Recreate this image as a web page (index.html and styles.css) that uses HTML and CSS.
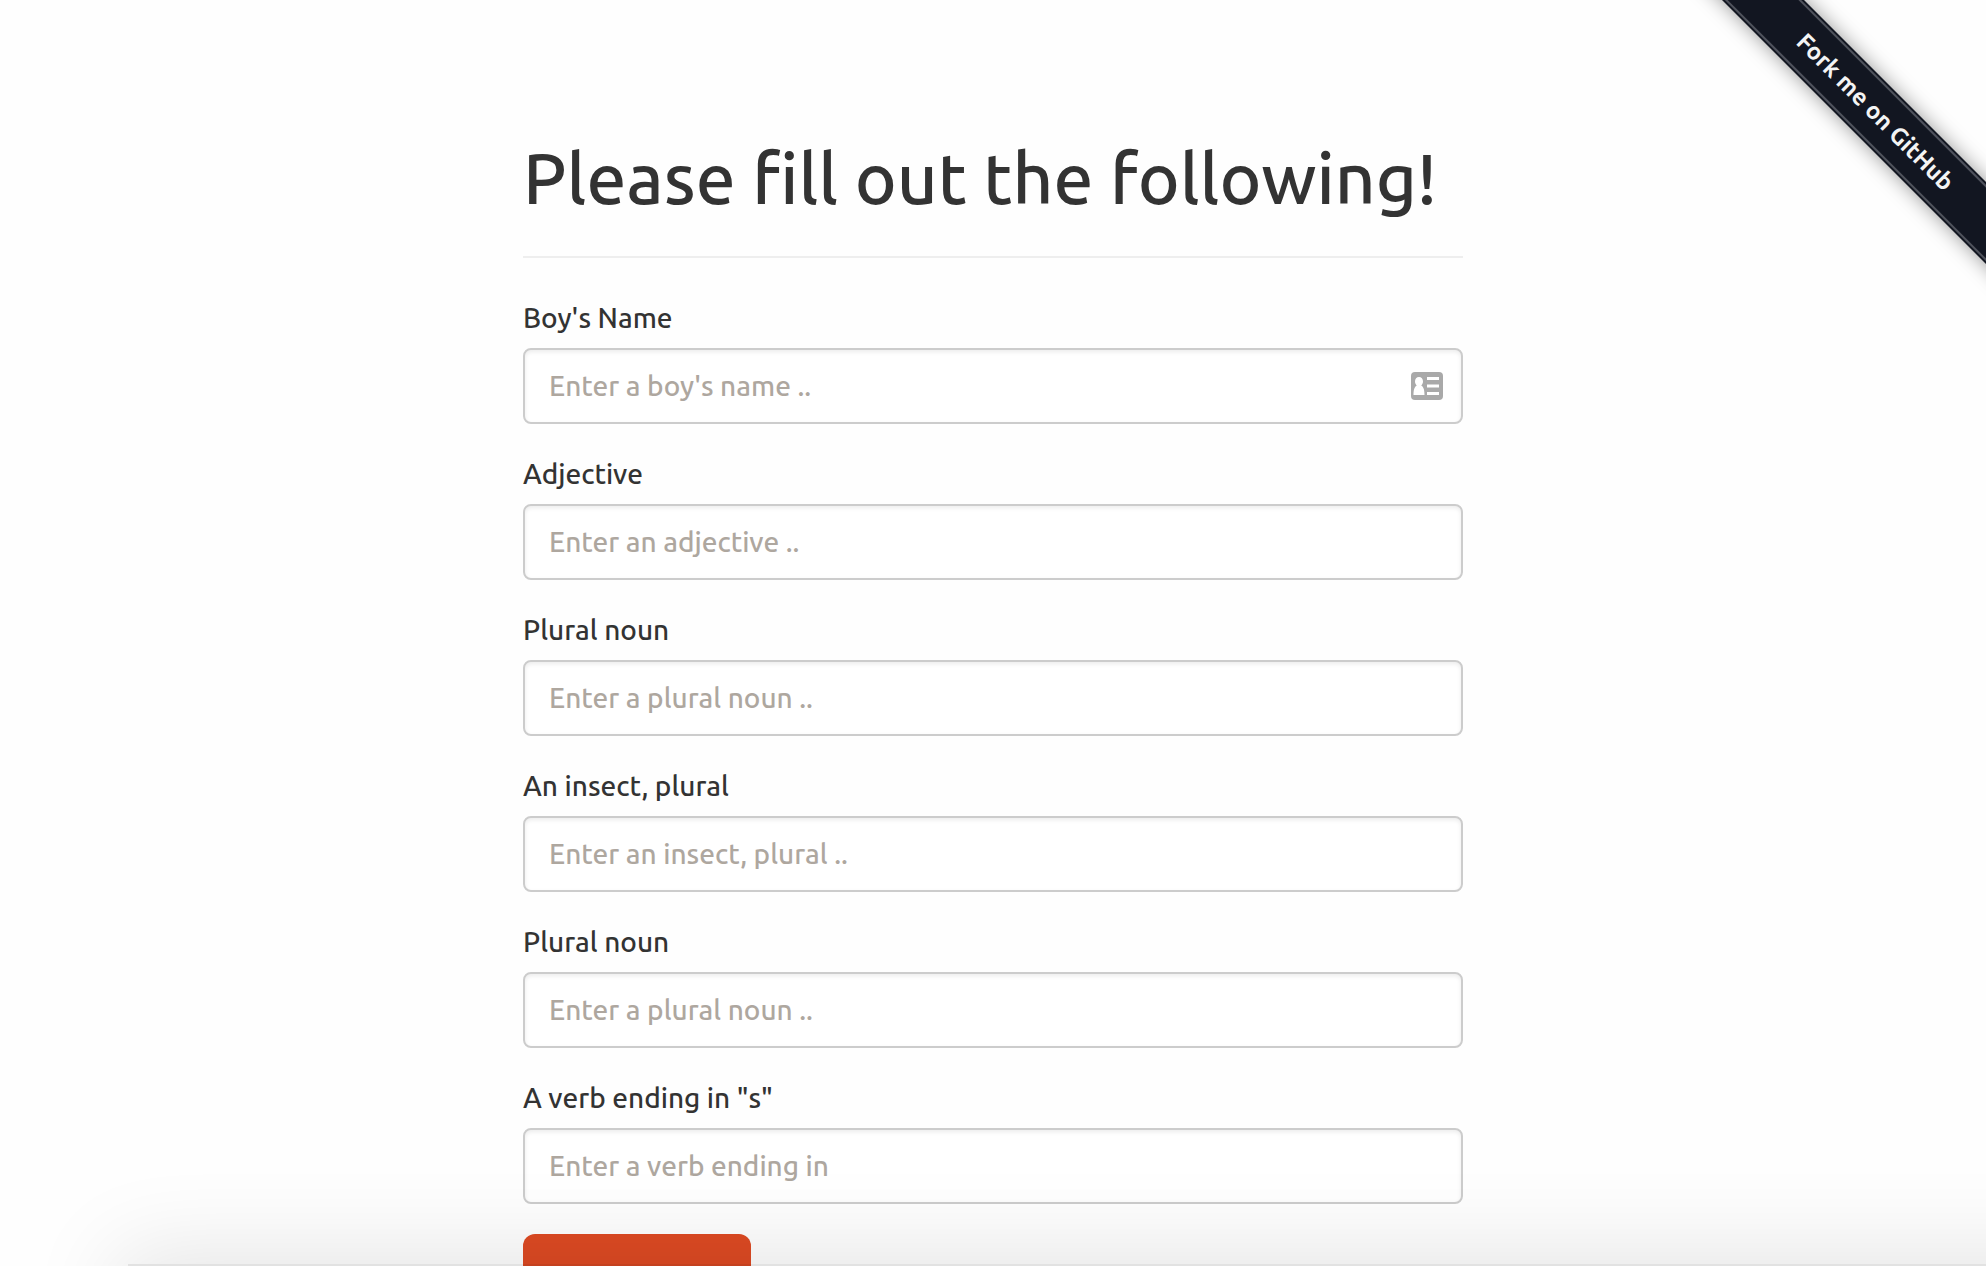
FILE: index.html
```html
<!DOCTYPE html>
<html lang="en">
<head>
<meta charset="utf-8">
<meta name="viewport" content="width=device-width, initial-scale=1">
<title>Please fill out the following!</title>
<link rel="stylesheet" href="styles.css">
</head>
<body>
<main class="container">
  <header class="page-header">
    <h1 class="page-title">Please fill out the following!</h1>
  </header>
  <form class="form">
    <div class="form-group">
      <label class="form-label" for="boy">Boy's Name</label>
      <div class="field">
        <input class="form-control" id="boy" type="text" placeholder="Enter a boy's name ..">
        <svg class="contact-icon" viewBox="0 0 32 28" aria-hidden="true">
          <rect width="32" height="28" rx="4" fill="#a9a9a9"/>
          <path fill="#fff" d="M8 5c2.500 0 4 2 4 4.500 0 1.800-.8 3.200-1.800 4C12.500 14.500 13.500 18 13.500 23H2.500c0-5 1-8.500 3.300-9.500C4.800 12.700 4 11.300 4 9.500 4 7 5.500 5 8 5zM16 5h12v3H16zM16 12.500h12v3H16zM16 20h12v3H16z"/>
        </svg>
      </div>
    </div>
    <div class="form-group">
      <label class="form-label" for="adjective">Adjective</label>
      <input class="form-control" id="adjective" type="text" placeholder="Enter an adjective ..">
    </div>
    <div class="form-group">
      <label class="form-label" for="noun-one">Plural noun</label>
      <input class="form-control" id="noun-one" type="text" placeholder="Enter a plural noun ..">
    </div>
    <div class="form-group">
      <label class="form-label" for="insect">An insect, plural</label>
      <input class="form-control" id="insect" type="text" placeholder="Enter an insect, plural ..">
    </div>
    <div class="form-group">
      <label class="form-label" for="noun-two">Plural noun</label>
      <input class="form-control" id="noun-two" type="text" placeholder="Enter a plural noun ..">
    </div>
    <div class="form-group">
      <label class="form-label" for="verb">A verb ending in "s"</label>
      <input class="form-control" id="verb" type="text" placeholder="Enter a verb ending in">
    </div>
    <button class="submit" type="submit" aria-label="Submit"></button>
  </form>
</main>
<div class="ribbon-corner"><a class="ribbon" href="#">Fork me on GitHub</a></div>
<div class="dock"><div class="dock-shadow"></div></div>
</body>
</html>
```
FILE: styles.css
```css
* { box-sizing: border-box; }

html { overflow: hidden; }

body {
  position: relative;
  height: 100vh;
  margin: 0;
  overflow: hidden;
  background: #fefefe;
  color: #333;
  font-family: Ubuntu, "Noto Sans", sans-serif;
  font-size: 28px;
  font-weight: 500;
  line-height: 40px;
}

.container {
  width: 100%;
  max-width: 940px;
  margin: 0 auto;
  padding-top: 136px;
}

.page-header {
  margin-bottom: 40px;
  padding-bottom: 36px;
  border-bottom: 2px solid #eee;
}

.page-title {
  margin: 0;
  font-size: 71px;
  font-weight: 500;
  line-height: 84px;
}

.form-group { margin-bottom: 30px; }

.form-label {
  display: block;
  margin-bottom: 10px;
}

.field { position: relative; }

.form-control {
  display: block;
  width: 100%;
  height: 76px;
  padding: 15px 24px 17px;
  border: 2px solid #ccc;
  border-radius: 8px;
  background: #fff;
  box-shadow: inset 0 2px 4px rgba(0, 0, 0, .08);
  color: #333;
  font: inherit;
}

.form-control::placeholder { color: #aea79f; opacity: 1; }

.contact-icon {
  position: absolute;
  top: 24px;
  right: 20px;
  width: 32px;
  height: 28px;
}

.submit {
  display: block;
  min-width: 228px;
  height: 108px;
  border: 0;
  border-radius: 12px;
  background: #dd4a23;
}

.ribbon-corner {
  position: absolute;
  top: 0;
  right: 0;
  width: 300px;
  height: 300px;
  overflow: hidden;
  pointer-events: none;
}

.ribbon {
  position: absolute;
  top: 83px;
  left: -51px;
  width: 480px;
  height: 58px;
  background: #121621;
  box-shadow: 0 0 20px rgba(0, 0, 0, .4);
  color: #f4f4f4;
  font-size: 24px;
  font-weight: 600;
  line-height: 58px;
  text-align: center;
  text-decoration: none;
  transform: rotate(45deg);
  pointer-events: auto;
}

.ribbon::before {
  content: "";
  position: absolute;
  inset: 2px 0;
  border-top: 2px solid #4f525c;
  border-bottom: 2px solid #4f525c;
}

.dock {
  position: absolute;
  inset: 0;
  overflow: hidden;
  pointer-events: none;
}

.dock-shadow {
  position: absolute;
  top: calc(100% - 2px);
  right: -200px;
  left: 128px;
  height: 200px;
  background: rgba(0, 0, 0, .11);
  box-shadow: 0 0 90px 12px rgba(0, 0, 0, .1);
}
```
